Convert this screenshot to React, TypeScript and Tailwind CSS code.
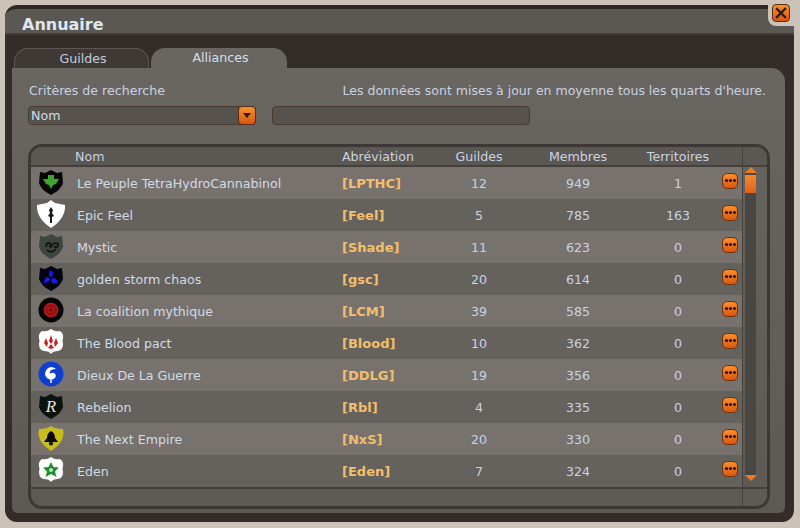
import type { ReactNode } from 'react';

interface Alliance {
  name: string;
  tag: string;
  guilds: number;
  members: number;
  territories: number;
  emblem: ReactNode;
}

// Shield outlines used by the alliance emblems
const SHIELD = 'M2 3 L7 4 L13 1 L19 4 L24 3 L25 14 Q23 21 13 26 Q3 21 1 14 Z';
const ROUND_SHIELD = 'M13 0 Q17 3 22 2 Q26 5 25 9 Q24 12 25 15 Q25 21 20 22 Q15 22 13 25 Q11 22 6 22 Q1 21 1 15 Q2 12 1 9 Q0 5 4 2 Q9 3 13 0 Z';

function Emblem({ children }: { children: ReactNode }) {
  return (
    <svg width="26" height="26" viewBox="0 0 26 26" className="block overflow-visible">
      {children}
    </svg>
  );
}

const alliances: Alliance[] = [
  {
    name: 'Le Peuple TetraHydroCannabinol',
    tag: '[LPTHC]',
    guilds: 12,
    members: 949,
    territories: 1,
    emblem: (
      <Emblem>
        <path d={SHIELD} fill="#050505" />
        <path d="M13 6 L16 6 L16 10 L21 10 L18 15 L15 16 L13 20 L11 16 L8 15 L5 10 L10 10 L10 6 Z" fill="#3ea52d" />
      </Emblem>
    ),
  },
  {
    name: 'Epic Feel',
    tag: '[Feel]',
    guilds: 5,
    members: 785,
    territories: 163,
    emblem: (
      <Emblem>
        <path d="M13 -1 L17 2 L27 4 Q28 17 13 27 Q-2 17 -1 4 L9 2 Z" fill="#ffffff" />
        <path d="M13 6 L15 9 L14 12 L16 15 L14 16 L14 22 L12 22 L12 16 L10 15 L12 12 L11 9 Z" fill="#1a1a1a" />
      </Emblem>
    ),
  },
  {
    name: 'Mystic',
    tag: '[Shade]',
    guilds: 11,
    members: 623,
    territories: 0,
    emblem: (
      <Emblem>
        <path d={SHIELD} fill="#3e4640" />
        <path d="M8 14 Q8 9 12 10 Q14 12 11 13 M12 15 Q16 8 20 11 Q21 15 16 14 M9 17 Q14 21 18 16" fill="none" stroke="#111513" strokeWidth="1.8" />
      </Emblem>
    ),
  },
  {
    name: 'golden storm chaos',
    tag: '[gsc]',
    guilds: 20,
    members: 614,
    territories: 0,
    emblem: (
      <Emblem>
        <path d={SHIELD} fill="#040410" />
        <path d="M12 5 Q17 7 14 11 Q13 13 11 11 Q11 8 12 5 M20 17 Q16 21 13 16 Q13 13 16 13 Q19 14 20 17 M6 18 Q6 12 10 12 Q13 14 11 16 Q9 18 6 18" fill="#1a1ae0" />
      </Emblem>
    ),
  },
  {
    name: 'La coalition mythique',
    tag: '[LCM]',
    guilds: 39,
    members: 585,
    territories: 0,
    emblem: (
      <Emblem>
        <circle cx="13" cy="13" r="12.5" fill="#050505" />
        <circle cx="13" cy="13" r="7.5" fill="#a81818" />
        <circle cx="13" cy="13" r="4.5" fill="none" stroke="#7a1010" strokeWidth="1" />
        <circle cx="13" cy="13" r="1.5" fill="#6a0c0c" />
      </Emblem>
    ),
  },
  {
    name: 'The Blood pact',
    tag: '[Blood]',
    guilds: 10,
    members: 362,
    territories: 0,
    emblem: (
      <Emblem>
        <path d={ROUND_SHIELD} fill="#ffffff" />
        <path d="M13 6 L15 12 L13 15 L11 12 Z M8 9 L10 14 L9 18 L6 14 Z M18 9 L20 14 L17 18 L16 14 Z M13 15 L16 19 L13 20 L10 19 Z" fill="#c52222" />
      </Emblem>
    ),
  },
  {
    name: 'Dieux De La Guerre',
    tag: '[DDLG]',
    guilds: 19,
    members: 356,
    territories: 0,
    emblem: (
      <Emblem>
        <circle cx="13" cy="13" r="12.5" fill="#0f3fd0" />
        <path d="M18 8 Q13 4 9 8 Q5 13 9 17 Q13 20 17 17 Q19 14 16 12 Q13 11 12 13 Q11 11 13 9 Q16 8 18 8 Z" fill="#ffffff" />
        <path d="M13 18 L13 22" stroke="#ffffff" strokeWidth="1.5" />
      </Emblem>
    ),
  },
  {
    name: 'Rebelion',
    tag: '[Rbl]',
    guilds: 4,
    members: 335,
    territories: 0,
    emblem: (
      <Emblem>
        <path d={SHIELD} fill="#0c130e" />
        <text x="13" y="19" textAnchor="middle" fontFamily="'Liberation Serif', serif" fontStyle="italic" fontSize="17" fill="#e8e8dc">
          R
        </text>
      </Emblem>
    ),
  },
  {
    name: 'The Next Empire',
    tag: '[NxS]',
    guilds: 20,
    members: 330,
    territories: 0,
    emblem: (
      <Emblem>
        <path d="M1 4 Q9 4 13 1 Q17 4 25 4 Q28 16 13 26 Q-2 16 1 4 Z" fill="#c9bd1c" />
        <path d="M13 6 Q17 8 17 13 L20 17 L6 17 L9 13 Q9 8 13 6 Z" fill="#0a0a05" />
        <circle cx="13" cy="18.5" r="2" fill="#0a0a05" />
      </Emblem>
    ),
  },
  {
    name: 'Eden',
    tag: '[Eden]',
    guilds: 7,
    members: 324,
    territories: 0,
    emblem: (
      <Emblem>
        <path d={ROUND_SHIELD} fill="#ffffff" />
        <path d="M13 5 L15.5 10 L21 10.5 L17 14.5 L18.5 20 L13 17 L7.5 20 L9 14.5 L5 10.5 L10.5 10 Z" fill="#1f8f2c" />
        <circle cx="13" cy="13" r="2" fill="#bfe6c0" />
      </Emblem>
    ),
  },
];

function MoreButton() {
  return (
    <div className="flex h-[16px] w-[16px] items-center justify-center gap-[1px] rounded-[5px] border border-[#6a3212] bg-gradient-to-b from-[#f7902c] to-[#d9560f]">
      <span className="h-[3px] w-[3px] rounded-full bg-[#1a0d05]" />
      <span className="h-[3px] w-[3px] rounded-full bg-[#1a0d05]" />
      <span className="h-[3px] w-[3px] rounded-full bg-[#1a0d05]" />
    </div>
  );
}

export default function App() {
  return (
    <div className="relative h-[528px] w-[800px] overflow-hidden bg-[#cbc3b7] pb-[6px] pl-[5px] pr-[6px] pt-[5px] font-['DejaVu_Sans',sans-serif] text-[12.6px] text-[#c9d3e0]">
      <div className="flex h-full flex-col overflow-hidden rounded-[12px] border-t-[4px] border-[#2f2926] bg-[#332c29]">
        {/* Title bar */}
        <div className="flex h-[26px] shrink-0 items-center border-b-[2px] border-[#423c39] bg-[#5b5753] pl-[17px] pt-[8px]">
          <span className="text-[16px] font-bold text-[#dfe7f0]">Annuaire</span>
        </div>

        {/* Tabs */}
        <div className="mt-[13px] flex h-[20px] shrink-0 gap-[2px] pl-[9px]">
          <div className="flex w-[135px] items-center justify-center rounded-t-[14px] border-x-[1px] border-t-[1px] border-[#5d5652] bg-[#3f3835] pl-[3px] pt-[1px] text-[#c4ced9]">
            Guildes
          </div>
          <div className="flex w-[136px] items-center justify-center rounded-t-[14px] bg-[#696561] pl-[3px] pt-[1px] text-[#d5deea]">
            Alliances
          </div>
        </div>

        {/* Panel */}
        <div className="mb-[9px] ml-[7px] mr-[9px] flex min-h-0 flex-1 flex-col rounded-b-[6px] rounded-tr-[14px] bg-gradient-to-b from-[#696561] to-[#5d5955] px-[16px] pt-[15px]">
          <div className="flex h-[16px] items-center justify-between pl-[1px] pr-[3px]">
            <span>Critères de recherche</span>
            <span className="text-[12.5px]">Les données sont mises à jour en moyenne tous les quarts d'heure.</span>
          </div>

          <div className="mt-[7px] flex gap-[16px]">
            <div className="flex h-[19px] w-[228px] items-center justify-between rounded-[4px] border border-[#4a3a30] bg-[#57524d] pl-[2px] text-[#d5deea]">
              <span className="pt-[1px]">Nom</span>
              <div className="-mr-px flex h-[19px] w-[18px] items-center justify-center rounded-[4px] border border-[#5b2c12] bg-gradient-to-b from-[#f6902f] to-[#d9560f]">
                <span className="h-0 w-0 border-x-[4px] border-t-[5px] border-x-transparent border-t-[#2a1a10]" />
              </div>
            </div>
            <div className="h-[19px] w-[258px] rounded-[4px] border border-[#4a3a30] bg-[#57524d]" />
          </div>

          {/* Results table */}
          <div className="mt-[19px] flex h-[365px] w-[742px] flex-col overflow-hidden rounded-[14px] border-[3px] border-[#3d3835]">
            <div className="flex h-[20px] shrink-0 border-b-[2px] border-[#45403c] bg-[#5b5753]">
              <div className="grid w-[711px] grid-cols-[311px_100px_74px_124px_76px_26px] items-center pt-[1px] text-[#c9d3e0]">
                <span className="pl-[44px]">Nom</span>
                <span>Abréviation</span>
                <span className="text-center">Guildes</span>
                <span className="text-center">Membres</span>
                <span className="text-center">Territoires</span>
                <span />
              </div>
              <div className="flex-1 border-l border-[#45403c]" />
            </div>

            <div className="flex h-[320px] shrink-0">
              <div className="w-[711px] shrink-0">
                {alliances.map((a, i) => (
                  <div
                    key={a.tag}
                    className={`grid h-[32px] grid-cols-[46px_265px_100px_74px_124px_76px_26px] items-center ${
                      i % 2 === 0 ? 'bg-[#78726f]' : 'bg-[#65615d]'
                    }`}
                  >
                    <div className="flex justify-center pb-[2px] pr-[7px]">{a.emblem}</div>
                    <span className="pt-[2px] text-[#d1dbe7]">{a.name}</span>
                    <span className="pt-[2px] text-[13px] font-bold text-[#f4bf6a]">{a.tag}</span>
                    <span className="pt-[2px] text-center">{a.guilds}</span>
                    <span className="pt-[2px] text-center">{a.members}</span>
                    <span className="pt-[2px] text-center">{a.territories}</span>
                    <div className="-mt-[5px] flex justify-start pl-[6px]">
                      <MoreButton />
                    </div>
                  </div>
                ))}
              </div>

              {/* Scrollbar */}
              <div className="flex-1 border-l border-[#45403c] pl-[2px]">
                <div className="flex h-[314px] w-[11px] flex-col items-center">
                  <span className="h-0 w-0 border-x-[6px] border-b-[6px] border-x-transparent border-b-[#ef7a1f]" />
                  <div className="flex w-[11px] flex-1 flex-col bg-[#4a4643] pt-[2px]">
                    <div className="h-[18px] bg-gradient-to-b from-[#f08a30] to-[#e0601a]" />
                  </div>
                  <span className="h-0 w-0 border-x-[6px] border-t-[6px] border-x-transparent border-t-[#ef7a1f]" />
                </div>
              </div>
            </div>

            <div className="flex min-h-0 flex-1 border-t-[2px] border-[#45403c]">
              <div className="w-[711px]" />
              <div className="flex-1 border-l border-[#45403c]" />
            </div>
          </div>
        </div>
      </div>

      {/* Close button sits over the window corner */}
      <div className="absolute right-0 top-0 flex h-[26px] w-[32px] items-start rounded-bl-[8px] bg-[#cbc3b7] pl-[4px] pt-[4px]">
        <div className="flex h-[18px] w-[18px] items-center justify-center rounded-[4px] border border-[#5b2c12] bg-gradient-to-b from-[#f6902f] to-[#d9560f]">
          <svg width="12" height="12" viewBox="0 0 12 12">
            <path d="M2 2 L10 10 M10 2 L2 10" stroke="#2e1c10" strokeWidth="2.4" strokeLinecap="square" />
          </svg>
        </div>
      </div>
    </div>
  );
}
